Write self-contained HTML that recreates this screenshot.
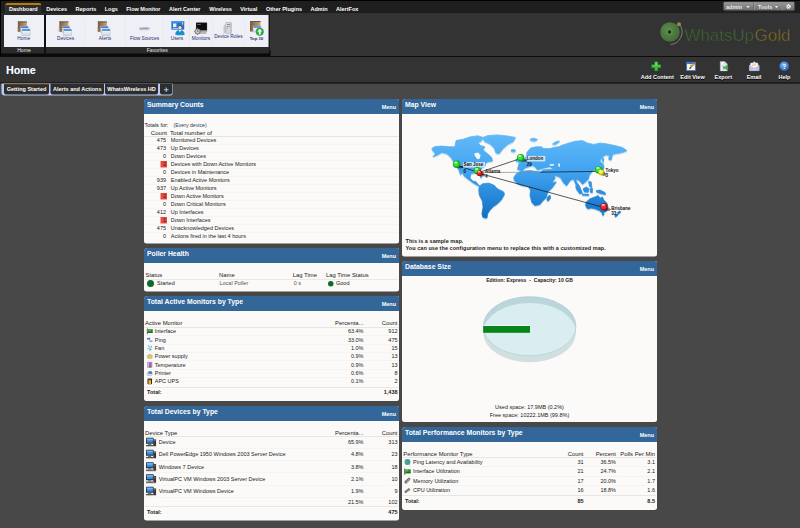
<!DOCTYPE html>
<html>
<head>
<meta charset="utf-8">
<title>WhatsUp Gold - Home</title>
<style>
*{box-sizing:border-box;margin:0;padding:0}
html,body{width:800px;height:528px;overflow:hidden;background:#484848}
body{font-family:"Liberation Sans",sans-serif;font-size:11px;color:#222}
#root{position:absolute;left:0;top:0;width:1600px;height:1056px;transform:scale(.5);transform-origin:0 0;background:#484848;overflow:hidden}
.abs{position:absolute}
/* top nav */
#nav{position:absolute;left:0;top:0;width:1600px;height:28px;background:#1e1e1e;border-top:2px solid #000;border-left:2px solid #000}
.mi{position:absolute;top:10.5px;font-weight:bold;font-size:11px;color:#fff;white-space:nowrap;line-height:13px}
#dashtab{position:absolute;left:10px;top:6px;width:73px;height:22px;background:#2c2c2c;border-top:4px solid #b9790f;border-left:1px solid #595959;border-right:1px solid #444;border-radius:5px 5px 0 0}
#ribbon{position:absolute;left:2px;top:27px;width:539px;height:82px;background:#2a2a2a;border-top:1px solid #505050;border-right:2px solid #0a0a0a;border-bottom:2px solid #0a0a0a;border-radius:0 0 6px 4px}
.grp{position:absolute;top:30px;height:64px;background:#eff0f6}
.glab{position:absolute;top:94px;height:13px;line-height:13px;font-size:10.3px;color:#e4e4e4;text-align:center}
.rb{position:absolute;font-size:9.6px;color:#1b2a6b;text-align:center;white-space:nowrap;line-height:11px;transform:translateX(-50%)}
.vsep{position:absolute;top:33px;height:58px;width:1px;background:#e2e3ea}
/* title band */
#band{position:absolute;left:0;top:112px;width:1600px;height:55px;background:#333;border-top:2px solid #0c0c0c;border-bottom:2px solid #0c0c0c}
#righttop{position:absolute;left:541px;top:27px;width:1059px;height:85px;background:#333;border-top:1px solid #3c3c3c}
#hometitle{position:absolute;left:12px;top:127px;font-size:21.3px;font-weight:bold;color:#fff;line-height:26px;text-shadow:1px 1px 0 #4a6a9a}
.tb{position:absolute;top:148px;font-weight:bold;font-size:11px;color:#fff;white-space:nowrap;line-height:13px;transform:translateX(-50%);text-shadow:0 1px 1px #000}
/* tabs */
#tabstrip{position:absolute;left:3px;top:167px;width:342px;height:24px;background:#b9c9f4;border-radius:0 0 4px 6px}
.tab{position:absolute;top:167px;height:22px;background:#2d2d2d;color:#fff;font-weight:bold;font-size:11px;line-height:20px;text-align:center;border-radius:0 0 4px 4px;white-space:nowrap}
/* panels */
.panel{position:absolute;background:#fbfaf8;border-radius:8px 4px 5px 5px;overflow:hidden}
.ph{position:absolute;left:0;top:0;right:0;height:30px;background:#336699}
.ph .t{position:absolute;left:6px;top:4px;font-size:13.7px;font-weight:bold;color:#fff;line-height:16px;white-space:nowrap}
.ph .m{position:absolute;right:6px;top:9px;font-size:11px;font-weight:bold;color:#fff;line-height:13px}
.tx{position:absolute;white-space:nowrap;line-height:13px;font-size:11px;color:#222}
.r{text-align:right}
.hl{position:absolute;height:1px;background:#d9d9d9}
</style>
</head>
<body>
<div id="root">

<svg width="0" height="0" style="position:absolute">
<defs>
<linearGradient id="gbrown" x1="0" y1="0" x2="1" y2="0"><stop offset="0" stop-color="#7d5a33"/><stop offset="1" stop-color="#c9a572"/></linearGradient>
<linearGradient id="gwin" x1="0" y1="0" x2="0" y2="1"><stop offset="0" stop-color="#ffffff"/><stop offset="1" stop-color="#cfd6e2"/></linearGradient>

</defs>
</svg>

<!-- NAV -->
<div id="nav"></div>
<div class="abs" style="left:0;top:100px;width:1600px;height:14px;background:#0a0a0a"></div>
<div id="righttop"></div>
<div id="ribbon"></div>
<div id="dashtab"></div>

<div class="grp" style="left:8px;width:80px"></div>
<div class="grp" style="left:92px;width:445px"></div>
<div class="abs" style="left:88px;top:29px;width:4px;height:80px;background:#111"></div>
<div class="glab" style="left:8px;width:80px">Home</div>
<div class="glab" style="left:92px;width:445px">Favorites</div>
<div class="vsep" style="left:169px"></div><div class="vsep" style="left:251px"></div><div class="vsep" style="left:327px"></div><div class="vsep" style="left:379px"></div><div class="vsep" style="left:425px"></div><div class="vsep" style="left:488px"></div>
<svg class="abs" style="left:33px;top:42px" width="29" height="30" viewBox="0 0 32 32" preserveAspectRatio="none">
 <rect x="3" y="1" width="20" height="22" fill="url(#gbrown)"/>
 <rect x="3" y="1" width="20" height="2" fill="#5a5a5a"/>
 <rect x="1" y="14" width="3" height="9" fill="#b9b9b9" opacity=".7"/>
 <rect x="9" y="11" width="17" height="13" fill="url(#gwin)" stroke="#a9b4c6" stroke-width="1"/>
 <rect x="9.5" y="11.5" width="16" height="3.5" fill="#3f7fd6"/>
 <rect x="12" y="17" width="18" height="14" fill="url(#gwin)" stroke="#a9b4c6" stroke-width="1"/>
 <rect x="12.5" y="17.5" width="17" height="3.5" fill="#3f7fd6"/>
</svg>
<svg class="abs" style="left:116px;top:42px" width="29" height="30" viewBox="0 0 32 32" preserveAspectRatio="none">
 <rect x="3" y="1" width="20" height="22" fill="url(#gbrown)"/>
 <rect x="3" y="1" width="20" height="2" fill="#5a5a5a"/>
 <rect x="1" y="14" width="3" height="9" fill="#b9b9b9" opacity=".7"/>
 <rect x="9" y="11" width="17" height="13" fill="url(#gwin)" stroke="#a9b4c6" stroke-width="1"/>
 <rect x="9.5" y="11.5" width="16" height="3.5" fill="#3f7fd6"/>
 <rect x="12" y="17" width="18" height="14" fill="url(#gwin)" stroke="#a9b4c6" stroke-width="1"/>
 <rect x="12.5" y="17.5" width="17" height="3.5" fill="#3f7fd6"/>
</svg>
<svg class="abs" style="left:193px;top:42px" width="29" height="30" viewBox="0 0 32 32" preserveAspectRatio="none">
 <rect x="3" y="1" width="20" height="22" fill="url(#gbrown)"/>
 <rect x="3" y="1" width="20" height="2" fill="#5a5a5a"/>
 <rect x="1" y="14" width="3" height="9" fill="#b9b9b9" opacity=".7"/>
 <rect x="9" y="11" width="17" height="13" fill="url(#gwin)" stroke="#a9b4c6" stroke-width="1"/>
 <rect x="9.5" y="11.5" width="16" height="3.5" fill="#3f7fd6"/>
 <rect x="12" y="17" width="18" height="14" fill="url(#gwin)" stroke="#a9b4c6" stroke-width="1"/>
 <rect x="12.5" y="17.5" width="17" height="3.5" fill="#3f7fd6"/>
</svg>
<div class="rb" style="left:47.5px;top:71px">Home</div>
<div class="rb" style="left:131px;top:71px">Devices</div>
<div class="rb" style="left:210px;top:71px">Alerts</div>
<!-- flow sources -->
<svg class="abs" style="left:277px;top:51px" width="25" height="12.5" viewBox="0 0 40 20">
 <path d="M2 6 L32 5 L38 9 L32 14 L3 14 Z" fill="#c2c4cf"/>
 <path d="M4 8 L30 7.5 L30 11.5 L4 11.5Z" fill="#9c97c6"/>
 <path d="M3 14 L32 14 L38 9 L38 11 L32 16 L3 16Z" fill="#d5d7df"/>
</svg>
<div class="rb" style="left:289px;top:71px">Flow Sources</div>
<!-- users -->
<svg class="abs" style="left:342px;top:41px" width="28" height="30" viewBox="0 0 36 36" preserveAspectRatio="none">
 <rect x="1" y="2" width="33" height="20" fill="#1f6fd8"/>
 <rect x="1" y="2" width="33" height="4" fill="#3f8ff0"/>
 <rect x="5" y="7" width="9" height="9" fill="#e8eef8"/>
 <rect x="28" y="5" width="3" height="5" fill="#f2e14a"/>
 <rect x="4" y="18" width="16" height="2" fill="#bcd3f2"/>
 <circle cx="23" cy="16" r="5.5" fill="#6b5a4a"/>
 <circle cx="23" cy="17.5" r="4.2" fill="#f1d9c4"/>
 <path d="M11 34 Q11 23 23 23 Q35 23 35 34 Q23 38 11 34Z" fill="#1c90c8"/>
 <path d="M20 23 L23 28 L26 23Z" fill="#fff"/>
</svg>
<div class="rb" style="left:354px;top:71px">Users</div>
<!-- monitors -->
<svg class="abs" style="left:387px;top:44px" width="29" height="27" viewBox="0 0 36 34">
 <rect x="6" y="1" width="28" height="22" rx="1.5" fill="#222"/>
 <rect x="8" y="3" width="24" height="17" fill="#0d0d0d"/>
 <rect x="9" y="5" width="9" height="1.5" fill="#9aa"/>
 <rect x="6" y="21" width="28" height="4" fill="#aaa"/>
 <rect x="16" y="25" width="16" height="5" fill="#b5b5b5"/><circle cx="10" cy="24" r="7.5" fill="#828282"/>
 <circle cx="10" cy="24" r="5" fill="#c8c8c8"/>
 <path d="M10 20.5 V24 H13" stroke="#544" stroke-width="1.3" fill="none"/>
 <path d="M10 14.5 V17 M10 31 V33.5 M.5 24 H3 M17 24 H19.5 M3.5 17.5 L5.3 19.3 M16.5 17.5 L14.7 19.3 M3.5 30.5 L5.3 28.7 M16.5 30.5 L14.7 28.7" stroke="#828282" stroke-width="2.4"/>
</svg>
<div class="rb" style="left:402px;top:71px">Monitors</div>
<!-- device roles -->
<svg class="abs" style="left:446px;top:44px" width="20" height="24" viewBox="0 0 20 24">
 <path d="M1 8 L6 3 V21 L1 23Z" fill="#c5c7cc"/>
 <rect x="6" y="1" width="10" height="22" fill="#d9dade" stroke="#a8aab0" stroke-width="1"/>
 <rect x="8" y="4" width="6" height="2" fill="#8d9097"/><rect x="8" y="8" width="6" height="1.4" fill="#8d9097"/>
 <rect x="8" y="11" width="2" height="2" fill="#4cb04c"/>
 <rect x="15" y="2" width="2" height="20" fill="#b0b2b8"/>
</svg>
<div class="rb" style="left:457px;top:66.5px">Device Roles</div>
<!-- top 10 -->
<svg class="abs" style="left:496px;top:41px" width="34" height="34" viewBox="0 0 34 34">
 <rect x="4" y="1" width="21" height="21" fill="url(#gbrown)"/>
 <rect x="4" y="1" width="21" height="2" fill="#5a5a5a"/>
 <rect x="10" y="11" width="16" height="12" fill="url(#gwin)" stroke="#a9b4c6"/>
 <rect x="10.5" y="11.5" width="15" height="3" fill="#3f7fd6"/>
 <circle cx="23.5" cy="22.5" r="7.5" fill="#2fae46"/>
 <circle cx="23.5" cy="22.5" r="7.5" fill="none" stroke="#1d8a33" stroke-width="1"/>
 <path d="M23.5 16.5 L28.5 22 H25.3 V28 H21.7 V22 H18.5Z" fill="#fff"/>
</svg>
<div class="rb" style="left:513px;top:71px;font-weight:bold;font-size:8.6px">Top 10</div>

<div id="nav2" style="position:absolute;left:0;top:0">
<div class="mi" style="left:18px">Dashboard</div><div class="mi" style="left:92.5px">Devices</div><div class="mi" style="left:151px">Reports</div><div class="mi" style="left:209.5px">Logs</div><div class="mi" style="left:252.5px">Flow Monitor</div><div class="mi" style="left:338px">Alert Center</div><div class="mi" style="left:418.5px">Wireless</div><div class="mi" style="left:480.5px">Virtual</div><div class="mi" style="left:532px">Other Plugins</div><div class="mi" style="left:621px">Admin</div><div class="mi" style="left:672px">AlertFox</div>
</div>


<!-- admin/tools -->
<div class="abs" style="left:1446px;top:3px;width:144px;height:19px;border-radius:4px;background:linear-gradient(#9a9a9a,#6e6e6e);border:1px solid #555"></div>
<div class="abs" style="left:1507px;top:4px;width:1px;height:17px;background:#5a5a5a"></div><div class="abs" style="left:1508px;top:4px;width:1px;height:17px;background:#a5a5a5"></div>
<div class="abs" style="left:1564px;top:4px;width:1px;height:17px;background:#5a5a5a"></div><div class="abs" style="left:1565px;top:4px;width:1px;height:17px;background:#a5a5a5"></div>
<div class="mi" style="left:1452px;top:6.5px;text-shadow:0 1px 1px #333">admin</div>
<div class="mi" style="left:1516px;top:6.5px;text-shadow:0 1px 1px #333">Tools</div>
<svg class="abs" style="left:1492px;top:11px" width="8" height="6"><path d="M.5 1 H7.5 L4 5Z" fill="#eee"/></svg>
<svg class="abs" style="left:1549px;top:11px" width="8" height="6"><path d="M.5 1 H7.5 L4 5Z" fill="#eee"/></svg>
<svg class="abs" style="left:1572px;top:8px" width="10" height="10" viewBox="0 0 12 12"><circle cx="6" cy="6" r="4" fill="none" stroke="#fff" stroke-width="3" stroke-dasharray="2.1 1.04"/><circle cx="6" cy="6" r="3" fill="#fff"/><circle cx="6" cy="6" r="1.3" fill="#777"/></svg>
<!-- logo -->
<svg class="abs" style="left:1310px;top:36px" width="280" height="60" viewBox="0 0 280 60">
 <defs><radialGradient id="glogo" cx=".4" cy=".4" r=".7"><stop offset="0" stop-color="#5d8a4c"/><stop offset="1" stop-color="#3f6a33"/></radialGradient></defs>
 <path d="M49 13 A25 25 0 0 1 31 53" fill="none" stroke="#8d8d8d" stroke-width="1.6"/>
 <circle cx="30" cy="28" r="19.5" fill="url(#glogo)"/>
 <circle cx="29" cy="28" r="6" fill="#5f8f50"/>
 <circle cx="29" cy="28" r="3.4" fill="#222"/>
 <circle cx="48" cy="12.5" r="4" fill="#9a8a4a"/>
 <text x="59" y="46" font-family="Liberation Sans, sans-serif" font-size="33.5" fill="#3f6f30" stroke="#333" stroke-width="1.1" paint-order="fill stroke" textLength="139" lengthAdjust="spacingAndGlyphs">WhatsUp</text>
 <text x="199" y="46" font-family="Liberation Sans, sans-serif" font-size="33.5" fill="#8a751d" stroke="#333" stroke-width="1.1" paint-order="fill stroke" textLength="72" lengthAdjust="spacingAndGlyphs">Gold</text>
</svg>

<div class="abs" style="left:0;top:0;width:2px;height:113px;background:#000"></div>
<div class="abs" style="left:11px;top:27px;width:72px;height:2px;background:#2c2c2c"></div>
<div id="band"></div>
<div id="hometitle">Home</div>


<!-- toolbar -->
<svg class="abs" style="left:1302px;top:122px" width="21" height="21" viewBox="0 0 24 24"><path d="M8.5 1.5 H15.5 V8.5 H22.5 V15.5 H15.5 V22.5 H8.5 V15.5 H1.5 V8.5 H8.5Z" fill="#3fc23f" stroke="#1f8a22" stroke-width="1.2"/><path d="M9.5 3 H14.5 V9.5 H21 V11 H3 V9.5 H9.5Z" fill="#7be07b" opacity=".7"/></svg>
<svg class="abs" style="left:1371px;top:122px" width="22" height="21" viewBox="0 0 24 24"><rect x="2" y="3" width="20" height="19" fill="#f4f7fb" stroke="#3b74c4" stroke-width="2"/><rect x="2" y="3" width="20" height="4" fill="#3b74c4"/><path d="M8 18 L10 13 L19 3 L22 6 L13 16 Z" fill="#e8a23a"/><path d="M8 18 L10 13 L13 16Z" fill="#333"/><path d="M17 5 L19 3 L22 6 L20 8Z" fill="#d4423a"/><path d="M10 10 L15 10" stroke="#3fae3f" stroke-width="2"/></svg>
<svg class="abs" style="left:1437px;top:122px" width="21" height="21" viewBox="0 0 24 24"><path d="M4 1 H14 L20 7 V23 H4Z" fill="#f2f5fa" stroke="#9fb0c8" stroke-width="1.2"/><path d="M14 1 V7 H20" fill="#d5deea" stroke="#9fb0c8"/><path d="M7 10 H14 M7 13 H12 M7 19 H15" stroke="#a9b7cc" stroke-width="1.2"/><path d="M11 13 H17 V9.5 L23 15 L17 20.5 V17 H11Z" fill="#3db43d" stroke="#1f8a22" stroke-width=".8"/></svg>
<svg class="abs" style="left:1497px;top:122px" width="23" height="21" viewBox="0 0 28 26"><path d="M2 11 L14 1 L26 11 V24 H2Z" fill="#d9dcf0" stroke="#9a9fc8"/><rect x="5" y="5" width="18" height="13" fill="#fff" stroke="#c9c9d8"/><path d="M2 11 L14 18 L26 11 V24 H2Z" fill="#c9cdea" stroke="#9a9fc8"/><path d="M2 24 L11 16 M26 24 L17 16" stroke="#9a9fc8"/><path d="M8 8 H20 M8 11 H18" stroke="#e0a030" stroke-width="1.2"/></svg>
<svg class="abs" style="left:1558px;top:122px" width="21" height="21" viewBox="0 0 24 24"><defs><radialGradient id="ghelp" cx=".4" cy=".3" r=".8"><stop offset="0" stop-color="#7db4f0"/><stop offset="1" stop-color="#1d5fb8"/></radialGradient></defs><circle cx="12" cy="12" r="11" fill="url(#ghelp)" stroke="#194f9a"/><text x="12" y="17.5" text-anchor="middle" font-family="Liberation Sans, sans-serif" font-weight="bold" font-size="15" fill="#fff">?</text></svg>
<div class="tb" style="left:1314.5px">Add Content</div>
<div class="tb" style="left:1385px">Edit View</div>
<div class="tb" style="left:1446.5px">Export</div>
<div class="tb" style="left:1508px">Email</div>
<div class="tb" style="left:1569px">Help</div>
<div id="tabstrip"></div>
<div class="tab" style="left:8px;width:90px;border-top:2px solid #b8760f;line-height:17px;top:167px;height:22px">Getting Started</div>
<div class="tab" style="left:101px;width:107px">Alerts and Actions</div>
<div class="tab" style="left:210px;width:106px">WhatsWireless HD</div>
<div class="tab" style="left:320px;width:24px"></div><svg class="abs" style="left:327px;top:174px" width="11" height="11"><path d="M5.5 1 V10 M1 5.5 H10" stroke="#9ccaf7" stroke-width="2.2"/></svg>


<!--PANELS-->
<div class="panel" style="left:288px;top:198px;width:510px;height:289px"><div class="ph"><div class="t">Summary Counts</div><div class="m">Menu</div></div></div>
<div class="tx " style="left:289px;top:244.0px;color:#223">Totals for:</div><div class="tx " style="left:347px;top:244.0px;color:#345;font-size:10.4px">(Every device)</div><div class="tx r" style="right:1266px;top:258.5px;font-size:12.2px">Count</div><div class="tx " style="left:340px;top:258.5px;font-size:12.2px">Total number of</div><div class="hl" style="left:289px;top:272px;width:508px;background:#cfcfcf"></div><div class="tx r" style="right:1268px;top:274.2px;">475</div><div class="tx " style="left:341.5px;top:274.2px;">Monitored Devices</div><div class="hl" style="left:289px;top:288.7px;width:508px;background:#eeeeee"></div><div class="tx r" style="right:1268px;top:290.2px;">473</div><div class="tx " style="left:341.5px;top:290.2px;">Up Devices</div><div class="hl" style="left:289px;top:304.7px;width:508px;background:#eeeeee"></div><div class="tx r" style="right:1268px;top:306.2px;">0</div><div class="tx " style="left:341.5px;top:306.2px;">Down Devices</div><div class="hl" style="left:289px;top:320.7px;width:508px;background:#eeeeee"></div><div class="abs" style="left:321px;top:322.2px;width:13px;height:13px;background:#ea4a42"></div><div class="tx r" style="right:1268px;top:322.2px;">2</div><div class="tx " style="left:341.5px;top:322.2px;">Devices with Down Active Monitors</div><div class="hl" style="left:289px;top:336.7px;width:508px;background:#eeeeee"></div><div class="tx r" style="right:1268px;top:338.2px;">0</div><div class="tx " style="left:341.5px;top:338.2px;">Devices in Maintenance</div><div class="hl" style="left:289px;top:352.7px;width:508px;background:#eeeeee"></div><div class="tx r" style="right:1268px;top:354.2px;">939</div><div class="tx " style="left:341.5px;top:354.2px;">Enabled Active Monitors</div><div class="hl" style="left:289px;top:368.7px;width:508px;background:#eeeeee"></div><div class="tx r" style="right:1268px;top:370.2px;">937</div><div class="tx " style="left:341.5px;top:370.2px;">Up Active Monitors</div><div class="hl" style="left:289px;top:384.7px;width:508px;background:#eeeeee"></div><div class="abs" style="left:321px;top:386.2px;width:13px;height:13px;background:#ea4a42"></div><div class="tx r" style="right:1268px;top:386.2px;">2</div><div class="tx " style="left:341.5px;top:386.2px;">Down Active Monitors</div><div class="hl" style="left:289px;top:400.7px;width:508px;background:#eeeeee"></div><div class="tx r" style="right:1268px;top:402.2px;">0</div><div class="tx " style="left:341.5px;top:402.2px;">Down Critical Monitors</div><div class="hl" style="left:289px;top:416.7px;width:508px;background:#eeeeee"></div><div class="tx r" style="right:1268px;top:418.2px;">412</div><div class="tx " style="left:341.5px;top:418.2px;">Up Interfaces</div><div class="hl" style="left:289px;top:432.7px;width:508px;background:#eeeeee"></div><div class="abs" style="left:321px;top:434.2px;width:13px;height:13px;background:#ea4a42"></div><div class="tx r" style="right:1268px;top:434.2px;">1</div><div class="tx " style="left:341.5px;top:434.2px;">Down Interfaces</div><div class="hl" style="left:289px;top:448.7px;width:508px;background:#eeeeee"></div><div class="tx r" style="right:1268px;top:450.2px;">475</div><div class="tx " style="left:341.5px;top:450.2px;">Unacknowledged Devices</div><div class="hl" style="left:289px;top:464.7px;width:508px;background:#eeeeee"></div><div class="tx r" style="right:1268px;top:466.2px;">0</div><div class="tx " style="left:341.5px;top:466.2px;">Actions fired in the last 4 hours</div>
<div class="panel" style="left:288px;top:496px;width:510px;height:87px"><div class="ph"><div class="t">Poller Health</div><div class="m">Menu</div></div></div>
<div class="tx " style="left:291px;top:543.5px;font-size:11.8px;">Status</div><div class="tx " style="left:438px;top:543.5px;font-size:11.8px;">Name</div><div class="tx " style="left:585.5px;top:543.5px;font-size:11.8px;">Lag Time</div><div class="tx " style="left:652px;top:543.5px;font-size:11.8px;">Lag Time Status</div><div class="hl" style="left:289px;top:558px;width:508px;background:#d8d8d8"></div><div class="abs" style="left:294px;top:559.5px;width:14px;height:14px;border-radius:50%;background:#0a6b2b"></div><div class="tx " style="left:314px;top:559.5px;">Started</div><div class="tx " style="left:439px;top:560.0px;color:#555">Local Poller</div><div class="tx " style="left:587.5px;top:560.0px;color:#555">0 s</div><div class="abs" style="left:655.5px;top:561.5px;width:11px;height:11px;border-radius:50%;background:#0a6b2b"></div><div class="tx " style="left:672px;top:560.0px;">Good</div>
<div class="panel" style="left:288px;top:592px;width:510px;height:210px"><div class="ph"><div class="t">Total Active Monitors by Type</div><div class="m">Menu</div></div></div>
<div class="tx " style="left:290px;top:639.3px;font-size:11.8px;">Active Monitor</div><div class="tx r" style="right:873px;top:639.3px;font-size:11.8px;">Percenta...</div><div class="tx r" style="right:805px;top:639.3px;font-size:11.8px;">Count</div><div class="hl" style="left:289px;top:654px;width:508px;background:#d4d4d4"></div><svg class="abs" style="left:292.5px;top:656.0px" width="13" height="13" viewBox="0 0 13 13"><path d="M1.5 1 V12.5" stroke="#222" stroke-width="1.6"/><rect x="2.5" y="2.5" width="10" height="7" fill="#1d8a1d"/><rect x="4" y="4" width="4" height="2" fill="#6fd06f"/><rect x="2.5" y="8.5" width="10" height="1.3" fill="#0c4d0c"/></svg><div class="tx " style="left:309.5px;top:656.0px;">Interface</div><div class="tx r" style="right:873px;top:656.0px;">63.4%</div><div class="tx r" style="right:805px;top:656.0px;">912</div><svg class="abs" style="left:292.5px;top:672.7px" width="13" height="13" viewBox="0 0 13 13"><path d="M1 3 L5 3 L5 1 L8 4.5 L5 8 L5 6 L1 6Z" fill="#5a6fd8"/><path d="M12 8 L8 8 L8 6.3 L5.5 9.5 L8 12.5 L8 11 L12 11Z" fill="#8f9fe8"/></svg><div class="tx " style="left:309.5px;top:672.7px;">Ping</div><div class="tx r" style="right:873px;top:672.7px;">33.0%</div><div class="tx r" style="right:805px;top:672.7px;">475</div><svg class="abs" style="left:292.5px;top:689.4px" width="13" height="13" viewBox="0 0 13 13"><path d="M6.5 6.5 L2 2 Q6.5 0 6.5 6.5 L11 2 Q12.5 6.5 6.5 6.5 L11 10 Q6.5 13 6.5 6.5 L2 10 Q.5 6.5 6.5 6.5Z" fill="#25b5d8"/><path d="M6.5 8 V13" stroke="#25b5d8" stroke-width="1.5"/></svg><div class="tx " style="left:309.5px;top:689.4px;">Fan</div><div class="tx r" style="right:873px;top:689.4px;">1.0%</div><div class="tx r" style="right:805px;top:689.4px;">15</div><svg class="abs" style="left:292.5px;top:706.1px" width="13" height="13" viewBox="0 0 13 13"><ellipse cx="6.5" cy="7.5" rx="6" ry="4.5" fill="#c9c2a0"/><ellipse cx="7" cy="8" rx="3.5" ry="2.5" fill="#f0c81e"/><path d="M2 5 L5 3 L9 3 L11 5" stroke="#999" fill="none"/></svg><div class="tx " style="left:309.5px;top:706.1px;">Power supply</div><div class="tx r" style="right:873px;top:706.1px;">0.9%</div><div class="tx r" style="right:805px;top:706.1px;">13</div><svg class="abs" style="left:292.5px;top:722.8px" width="13" height="13" viewBox="0 0 13 13"><rect x="1.5" y=".5" width="10" height="12" fill="#8f8fdc"/><rect x="2.5" y="1.5" width="3" height="10" fill="#b9b9f0"/><rect x="6" y="2" width="2" height="7" fill="#e03a2a"/><circle cx="7" cy="10" r="1.8" fill="#e03a2a"/></svg><div class="tx " style="left:309.5px;top:722.8px;">Temperature</div><div class="tx r" style="right:873px;top:722.8px;">0.9%</div><div class="tx r" style="right:805px;top:722.8px;">13</div><svg class="abs" style="left:292.5px;top:739.5px" width="13" height="13" viewBox="0 0 13 13"><ellipse cx="6" cy="8" rx="6" ry="4" fill="#b8bcc4"/><path d="M3 3 L10 2 L12 7 L5 9Z" fill="#3f86d8"/><rect x="2" y="8" width="8" height="2.5" fill="#e9ebf0"/></svg><div class="tx " style="left:309.5px;top:739.5px;">Printer</div><div class="tx r" style="right:873px;top:739.5px;">0.6%</div><div class="tx r" style="right:805px;top:739.5px;">8</div><svg class="abs" style="left:292.5px;top:756.2px" width="13" height="13" viewBox="0 0 13 13"><rect x="2" y="1" width="9" height="12" rx="1.5" fill="#2a2a2a"/><rect x="4" y="2" width="5" height="10" fill="#f0b81e"/><rect x="4" y="2" width="5" height="2.5" fill="#444"/></svg><div class="tx " style="left:309.5px;top:756.2px;">APC UPS</div><div class="tx r" style="right:873px;top:756.2px;">0.1%</div><div class="tx r" style="right:805px;top:756.2px;">2</div><div class="hl" style="left:289px;top:774px;width:508px;background:#d4d4d4"></div><div class="tx " style="left:294px;top:777.7px;font-weight:bold">Total:</div><div class="tx r" style="right:805px;top:777.7px;font-weight:bold">1,438</div><div class="hl" style="left:289px;top:670.8px;width:508px;background:#efefef"></div><div class="hl" style="left:289px;top:687.5px;width:508px;background:#efefef"></div><div class="hl" style="left:289px;top:704.2px;width:508px;background:#efefef"></div><div class="hl" style="left:289px;top:720.9px;width:508px;background:#efefef"></div><div class="hl" style="left:289px;top:737.6px;width:508px;background:#efefef"></div><div class="hl" style="left:289px;top:754.3px;width:508px;background:#efefef"></div>
<div class="panel" style="left:288px;top:812px;width:510px;height:229px"><div class="ph"><div class="t">Total Devices by Type</div><div class="m">Menu</div></div></div>
<div class="tx " style="left:290px;top:859.0px;font-size:11.8px;">Device Type</div><div class="tx r" style="right:873px;top:859.0px;font-size:11.8px;">Percenta...</div><div class="tx r" style="right:805px;top:859.0px;font-size:11.8px;">Count</div><div class="hl" style="left:289px;top:873px;width:508px;background:#d4d4d4"></div><svg class="abs" style="left:292px;top:873.5px" width="21" height="21" viewBox="0 0 13 13"><rect x="0" y="1" width="9.5" height="7.5" rx=".8" fill="#2b2b2b"/><rect x="1" y="2" width="7.5" height="5" fill="#2f8fe8"/><rect x="1" y="2" width="7.5" height="2" fill="#6fb8f5"/><rect x="9" y="3" width="3.6" height="8.5" fill="#3a3a3a"/><rect x="9.8" y="4.2" width="2" height=".8" fill="#999"/><rect x="2.5" y="8.5" width="4" height="1.2" fill="#555"/><rect x="0" y="10" width="9" height="1.6" fill="#444"/><rect x="0" y="11.6" width="12" height="1" fill="#ccc"/></svg><div class="tx " style="left:317.5px;top:877.5px;">Device</div><div class="tx r" style="right:873px;top:877.5px;">65.9%</div><div class="tx r" style="right:805px;top:877.5px;">313</div><svg class="abs" style="left:292px;top:898.0px" width="21" height="21" viewBox="0 0 13 13"><rect x="0" y="1" width="9.5" height="7.5" rx=".8" fill="#2b2b2b"/><rect x="1" y="2" width="7.5" height="5" fill="#2f8fe8"/><rect x="1" y="2" width="7.5" height="2" fill="#6fb8f5"/><rect x="9" y="3" width="3.6" height="8.5" fill="#3a3a3a"/><rect x="9.8" y="4.2" width="2" height=".8" fill="#999"/><rect x="2.5" y="8.5" width="4" height="1.2" fill="#555"/><rect x="0" y="10" width="9" height="1.6" fill="#444"/><rect x="0" y="11.6" width="12" height="1" fill="#ccc"/></svg><div class="tx " style="left:317.5px;top:902.0px;">Dell PowerEdge 1950 Windows 2003 Server Device</div><div class="tx r" style="right:873px;top:902.0px;">4.8%</div><div class="tx r" style="right:805px;top:902.0px;">23</div><svg class="abs" style="left:292px;top:922.6px" width="21" height="21" viewBox="0 0 13 13"><rect x="0" y="1" width="9.5" height="7.5" rx=".8" fill="#2b2b2b"/><rect x="1" y="2" width="7.5" height="5" fill="#2f8fe8"/><rect x="1" y="2" width="7.5" height="2" fill="#6fb8f5"/><rect x="9" y="3" width="3.6" height="8.5" fill="#3a3a3a"/><rect x="9.8" y="4.2" width="2" height=".8" fill="#999"/><rect x="2.5" y="8.5" width="4" height="1.2" fill="#555"/><rect x="0" y="10" width="9" height="1.6" fill="#444"/><rect x="0" y="11.6" width="12" height="1" fill="#ccc"/></svg><div class="tx " style="left:317.5px;top:926.6px;">Windows 7 Device</div><div class="tx r" style="right:873px;top:926.6px;">3.8%</div><div class="tx r" style="right:805px;top:926.6px;">18</div><svg class="abs" style="left:292px;top:947.1px" width="21" height="21" viewBox="0 0 13 13"><rect x="0" y="1" width="9.5" height="7.5" rx=".8" fill="#2b2b2b"/><rect x="1" y="2" width="7.5" height="5" fill="#2f8fe8"/><rect x="1" y="2" width="7.5" height="2" fill="#6fb8f5"/><rect x="9" y="3" width="3.6" height="8.5" fill="#3a3a3a"/><rect x="9.8" y="4.2" width="2" height=".8" fill="#999"/><rect x="2.5" y="8.5" width="4" height="1.2" fill="#555"/><rect x="0" y="10" width="9" height="1.6" fill="#444"/><rect x="0" y="11.6" width="12" height="1" fill="#ccc"/></svg><div class="tx " style="left:317.5px;top:951.1px;">VirtualPC VM Windows 2003 Server Device</div><div class="tx r" style="right:873px;top:951.1px;">2.1%</div><div class="tx r" style="right:805px;top:951.1px;">10</div><svg class="abs" style="left:292px;top:971.7px" width="21" height="21" viewBox="0 0 13 13"><rect x="0" y="1" width="9.5" height="7.5" rx=".8" fill="#2b2b2b"/><rect x="1" y="2" width="7.5" height="5" fill="#2f8fe8"/><rect x="1" y="2" width="7.5" height="2" fill="#6fb8f5"/><rect x="9" y="3" width="3.6" height="8.5" fill="#3a3a3a"/><rect x="9.8" y="4.2" width="2" height=".8" fill="#999"/><rect x="2.5" y="8.5" width="4" height="1.2" fill="#555"/><rect x="0" y="10" width="9" height="1.6" fill="#444"/><rect x="0" y="11.6" width="12" height="1" fill="#ccc"/></svg><div class="tx " style="left:317.5px;top:975.7px;">VirtualPC VM Windows Device</div><div class="tx r" style="right:873px;top:975.7px;">1.9%</div><div class="tx r" style="right:805px;top:975.7px;">9</div><div class="hl" style="left:289px;top:1013px;width:508px;background:#d4d4d4"></div><div class="tx " style="left:294px;top:1017.7px;font-weight:bold">Total:</div><div class="tx r" style="right:805px;top:1017.7px;font-weight:bold">475</div><div class="tx r" style="right:873px;top:997.0px;">21.5%</div><div class="tx r" style="right:805px;top:997.0px;">102</div><div class="hl" style="left:289px;top:896.3px;width:508px;background:#efefef"></div><div class="hl" style="left:289px;top:920.8px;width:508px;background:#efefef"></div><div class="hl" style="left:289px;top:945.4px;width:508px;background:#efefef"></div><div class="hl" style="left:289px;top:969.9px;width:508px;background:#efefef"></div><div class="hl" style="left:289px;top:994.5px;width:508px;background:#efefef"></div>
<div class="panel" style="left:804px;top:198px;width:510px;height:315px"><div class="ph"><div class="t">Map View</div><div class="m">Menu</div></div></div>
<div class="tx " style="left:811px;top:475.5px;font-weight:bold;letter-spacing:.1px">This is a sample map.</div><div class="tx " style="left:811px;top:489.0px;font-weight:bold;letter-spacing:.1px">You can use the configuration menu to replace this with a customized map.</div><svg class="abs" style="left:850px;top:250px" width="420" height="210" viewBox="0 0 420 210">
<defs><linearGradient id="gmap" gradientUnits="userSpaceOnUse" x1="0" y1="18" x2="0" y2="190"><stop offset="0" stop-color="#62baf8"/><stop offset=".45" stop-color="#3fa2f0"/><stop offset="1" stop-color="#0f6cc0"/></linearGradient></defs>
<g fill="#b9d4ea" stroke="#b9d4ea" stroke-width="1.5" stroke-linejoin="round" transform="translate(0,2.5)" opacity=".8"><polygon points="13.5,47.2 19.8,43.0 33.5,42.2 48.5,43.5 59.8,43.5 62.2,31.0 76.0,28.5 91.0,23.5 106.0,21.5 116.0,24.8 113.5,31.0 106.0,36.0 111.0,41.0 119.8,43.5 116.0,49.8 123.5,56.0 133.5,64.8 134.8,72.2 126.0,73.5 119.8,77.2 121.0,81.0 113.5,86.0 109.8,93.5 113.5,102.2 112.2,106.0 108.5,98.5 102.2,94.8 92.2,97.2 89.8,106.0 96.0,112.2 102.2,113.5 106.0,118.5 111.0,123.5 104.8,120.5 98.5,117.2 88.5,109.8 78.5,102.2 73.5,93.5 71.5,99.8 67.2,88.5 62.2,82.2 57.2,73.5 52.2,64.8 43.5,57.2 33.5,54.8 24.8,59.8 16.0,63.5 21.0,57.2 17.2,53.5"/><polygon points="116.0,24.8 126.0,21.0 146.0,19.8 166.0,22.2 181.0,24.8 176.0,33.5 166.0,38.5 156.0,47.2 148.5,57.2 142.2,56.0 138.5,46.0 131.0,38.5 118.5,32.2"/><polygon points="172.2,49.8 177.2,48.5 181.5,51.0 178.5,54.0 173.0,53.0"/><polygon points="108.8,122.5 115.0,117.5 127.5,116.2 137.5,120.0 145.0,127.5 157.5,133.8 158.8,138.8 152.5,150.0 145.0,157.5 137.5,162.5 130.0,170.0 125.0,177.5 123.8,186.2 116.2,185.0 113.8,177.5 116.2,165.0 115.0,152.5 108.8,140.0 107.5,130.0"/><polygon points="177.5,105.0 182.5,97.5 192.5,92.5 210.0,91.2 230.0,93.8 242.5,97.5 245.0,105.0 252.5,115.0 262.5,113.8 255.0,125.0 245.0,135.0 242.5,145.0 235.0,152.5 230.0,158.8 220.0,161.2 213.8,155.0 210.0,140.0 211.2,130.0 206.2,122.5 195.0,121.2 185.0,117.5 178.8,111.2"/><polygon points="245.0,143.8 250.0,140.0 251.2,146.2 246.2,152.5 243.8,150.0"/><polygon points="185.0,88.5 187.5,78.5 192.5,74.8 190.0,68.5 200.0,67.2 203.8,59.8 203.8,54.8 211.2,46.0 222.5,43.5 232.5,43.5 237.5,47.2 250.0,47.2 257.5,44.8 267.5,43.5 275.0,40.0 287.5,36.2 300.0,32.5 315.0,31.2 325.0,36.2 337.5,38.8 350.0,36.2 362.5,37.5 380.0,41.2 395.0,45.0 403.8,51.2 397.5,53.8 388.8,56.2 380.0,57.5 375.0,58.8 372.5,70.0 367.5,68.8 368.8,60.0 360.0,60.0 352.5,66.2 350.0,72.5 355.0,77.5 350.0,82.5 345.0,82.5 342.5,87.5 335.0,92.5 328.5,100.3 327.0,107.9 320.9,113.9 314.8,118.5 311.8,113.9 305.8,109.4 301.2,107.9 304.2,115.5 308.8,121.5 314.8,136.7 311.8,136.7 305.8,127.6 302.7,121.5 299.7,113.9 296.7,107.9 290.6,110.9 283.0,121.5 277.0,115.5 270.9,104.8 264.8,102.6 258.8,100.3 260.3,106.4 255.8,112.4 249.7,117.0 243.6,115.5 237.6,104.8 233.0,98.8 236.2,97.2 232.5,94.8 235.0,89.8 257.5,88.5 250.0,83.5 237.5,86.0 230.0,88.5 225.0,89.8 220.0,83.5 215.0,81.0 207.5,83.5 200.0,86.0 193.8,92.2"/><polygon points="187.5,64.8 191.2,62.2 193.8,68.5 192.5,74.8 187.0,76.0 188.8,69.8"/><polygon points="182.5,68.5 186.2,68.0 185.8,73.0 182.0,72.5"/><polygon points="210.0,28.5 217.5,26.0 225.0,29.0 220.0,32.0 212.5,31.5"/><polygon points="255.0,38.0 262.5,33.0 268.8,32.0 267.5,34.5 260.0,39.0"/><polygon points="351.2,81.2 356.2,77.5 358.0,85.0 355.0,93.8 348.8,96.2 350.0,90.0 353.0,86.2"/><polygon points="355.0,63.8 357.5,67.5 356.5,75.0 354.2,70.0"/><polygon points="327.5,112.5 332.5,113.8 333.8,125.0 330.0,123.8 328.0,117.5"/><polygon points="316.2,127.5 322.5,123.8 328.0,127.5 326.2,134.5 318.8,133.8"/><polygon points="301.2,122.5 306.2,125.0 312.5,135.0 310.0,138.0 303.8,130.0"/><polygon points="314.5,138.2 327.5,139.2 327.5,141.2 314.5,140.2"/><polygon points="330.0,127.5 335.0,127.0 334.5,135.5 331.0,134.5"/><polygon points="342.5,131.2 350.0,130.0 360.0,135.0 361.2,138.8 352.5,137.5 343.8,134.5"/><polygon points="322.5,153.8 330.0,147.5 340.0,143.8 346.2,141.2 350.0,146.2 355.0,143.8 357.5,150.0 363.8,156.2 366.2,165.0 362.5,172.5 355.0,176.2 348.8,171.2 340.0,167.5 332.5,166.2 325.0,167.5 321.2,161.2"/><polygon points="354.5,177.5 358.0,177.5 357.0,180.5 355.0,180.0"/><polygon points="385.0,175.0 390.0,172.0 391.2,174.5 387.0,177.5"/><polygon points="379.5,181.2 385.0,177.5 386.2,179.5 381.2,183.8"/></g>
<g fill="url(#gmap)" stroke="url(#gmap)" stroke-width="1.6" stroke-linejoin="round"><polygon points="13.5,47.2 19.8,43.0 33.5,42.2 48.5,43.5 59.8,43.5 62.2,31.0 76.0,28.5 91.0,23.5 106.0,21.5 116.0,24.8 113.5,31.0 106.0,36.0 111.0,41.0 119.8,43.5 116.0,49.8 123.5,56.0 133.5,64.8 134.8,72.2 126.0,73.5 119.8,77.2 121.0,81.0 113.5,86.0 109.8,93.5 113.5,102.2 112.2,106.0 108.5,98.5 102.2,94.8 92.2,97.2 89.8,106.0 96.0,112.2 102.2,113.5 106.0,118.5 111.0,123.5 104.8,120.5 98.5,117.2 88.5,109.8 78.5,102.2 73.5,93.5 71.5,99.8 67.2,88.5 62.2,82.2 57.2,73.5 52.2,64.8 43.5,57.2 33.5,54.8 24.8,59.8 16.0,63.5 21.0,57.2 17.2,53.5"/><polygon points="116.0,24.8 126.0,21.0 146.0,19.8 166.0,22.2 181.0,24.8 176.0,33.5 166.0,38.5 156.0,47.2 148.5,57.2 142.2,56.0 138.5,46.0 131.0,38.5 118.5,32.2"/><polygon points="172.2,49.8 177.2,48.5 181.5,51.0 178.5,54.0 173.0,53.0"/><polygon points="108.8,122.5 115.0,117.5 127.5,116.2 137.5,120.0 145.0,127.5 157.5,133.8 158.8,138.8 152.5,150.0 145.0,157.5 137.5,162.5 130.0,170.0 125.0,177.5 123.8,186.2 116.2,185.0 113.8,177.5 116.2,165.0 115.0,152.5 108.8,140.0 107.5,130.0"/><polygon points="177.5,105.0 182.5,97.5 192.5,92.5 210.0,91.2 230.0,93.8 242.5,97.5 245.0,105.0 252.5,115.0 262.5,113.8 255.0,125.0 245.0,135.0 242.5,145.0 235.0,152.5 230.0,158.8 220.0,161.2 213.8,155.0 210.0,140.0 211.2,130.0 206.2,122.5 195.0,121.2 185.0,117.5 178.8,111.2"/><polygon points="245.0,143.8 250.0,140.0 251.2,146.2 246.2,152.5 243.8,150.0"/><polygon points="185.0,88.5 187.5,78.5 192.5,74.8 190.0,68.5 200.0,67.2 203.8,59.8 203.8,54.8 211.2,46.0 222.5,43.5 232.5,43.5 237.5,47.2 250.0,47.2 257.5,44.8 267.5,43.5 275.0,40.0 287.5,36.2 300.0,32.5 315.0,31.2 325.0,36.2 337.5,38.8 350.0,36.2 362.5,37.5 380.0,41.2 395.0,45.0 403.8,51.2 397.5,53.8 388.8,56.2 380.0,57.5 375.0,58.8 372.5,70.0 367.5,68.8 368.8,60.0 360.0,60.0 352.5,66.2 350.0,72.5 355.0,77.5 350.0,82.5 345.0,82.5 342.5,87.5 335.0,92.5 328.5,100.3 327.0,107.9 320.9,113.9 314.8,118.5 311.8,113.9 305.8,109.4 301.2,107.9 304.2,115.5 308.8,121.5 314.8,136.7 311.8,136.7 305.8,127.6 302.7,121.5 299.7,113.9 296.7,107.9 290.6,110.9 283.0,121.5 277.0,115.5 270.9,104.8 264.8,102.6 258.8,100.3 260.3,106.4 255.8,112.4 249.7,117.0 243.6,115.5 237.6,104.8 233.0,98.8 236.2,97.2 232.5,94.8 235.0,89.8 257.5,88.5 250.0,83.5 237.5,86.0 230.0,88.5 225.0,89.8 220.0,83.5 215.0,81.0 207.5,83.5 200.0,86.0 193.8,92.2"/><polygon points="187.5,64.8 191.2,62.2 193.8,68.5 192.5,74.8 187.0,76.0 188.8,69.8"/><polygon points="182.5,68.5 186.2,68.0 185.8,73.0 182.0,72.5"/><polygon points="210.0,28.5 217.5,26.0 225.0,29.0 220.0,32.0 212.5,31.5"/><polygon points="255.0,38.0 262.5,33.0 268.8,32.0 267.5,34.5 260.0,39.0"/><polygon points="351.2,81.2 356.2,77.5 358.0,85.0 355.0,93.8 348.8,96.2 350.0,90.0 353.0,86.2"/><polygon points="355.0,63.8 357.5,67.5 356.5,75.0 354.2,70.0"/><polygon points="327.5,112.5 332.5,113.8 333.8,125.0 330.0,123.8 328.0,117.5"/><polygon points="316.2,127.5 322.5,123.8 328.0,127.5 326.2,134.5 318.8,133.8"/><polygon points="301.2,122.5 306.2,125.0 312.5,135.0 310.0,138.0 303.8,130.0"/><polygon points="314.5,138.2 327.5,139.2 327.5,141.2 314.5,140.2"/><polygon points="330.0,127.5 335.0,127.0 334.5,135.5 331.0,134.5"/><polygon points="342.5,131.2 350.0,130.0 360.0,135.0 361.2,138.8 352.5,137.5 343.8,134.5"/><polygon points="322.5,153.8 330.0,147.5 340.0,143.8 346.2,141.2 350.0,146.2 355.0,143.8 357.5,150.0 363.8,156.2 366.2,165.0 362.5,172.5 355.0,176.2 348.8,171.2 340.0,167.5 332.5,166.2 325.0,167.5 321.2,161.2"/><polygon points="354.5,177.5 358.0,177.5 357.0,180.5 355.0,180.0"/><polygon points="385.0,175.0 390.0,172.0 391.2,174.5 387.0,177.5"/><polygon points="379.5,181.2 385.0,177.5 386.2,179.5 381.2,183.8"/></g>
<g fill="#f6f8fa"><polygon points="98.5,57.2 106.0,54.8 111.0,59.8 109.8,67.2 104.8,68.5 102.2,64.8 99.8,62.2"/><polygon points="248.8,78.5 257.5,78.0 258.8,81.0 250.0,81.5"/><polygon points="266.2,77.2 269.5,77.2 270.0,83.5 267.0,83.0"/></g>
<line x1="62.0" y1="80.0" x2="107.0" y2="95.0" stroke="#111" stroke-width="1.4"/><line x1="108.0" y1="95.0" x2="191.2" y2="67.0" stroke="#111" stroke-width="1.4"/><line x1="110.0" y1="95.2" x2="230.0" y2="94.4" stroke="#8a8a8a" stroke-width="1.4"/><line x1="230.0" y1="94.4" x2="346.0" y2="92.8" stroke="#111" stroke-width="1.4"/><line x1="110.0" y1="97.0" x2="358.0" y2="165.0" stroke="#111" stroke-width="1.4"/><rect x="76.0" y="74.1" width="44" height="11" fill="#d9e9f7" opacity=".9"/><text x="77.0" y="82.8" font-family="Liberation Sans, sans-serif" font-size="9" font-weight="bold" fill="#111">San Jose</text><text x="77.0" y="95.2" font-family="Liberation Sans, sans-serif" font-size="9" font-weight="bold" fill="#111">0</text><text x="120.0" y="95.2" font-family="Liberation Sans, sans-serif" font-size="9" font-weight="bold" fill="#111">Atlanta</text><text x="120.0" y="105.4" font-family="Liberation Sans, sans-serif" font-size="9" font-weight="bold" fill="#111">4</text><rect x="202.6" y="61.9" width="38" height="11" fill="#d9e9f7" opacity=".9"/><text x="203.6" y="70.6" font-family="Liberation Sans, sans-serif" font-size="9" font-weight="bold" fill="#111">London</text><text x="203.6" y="82.0" font-family="Liberation Sans, sans-serif" font-size="9" font-weight="bold" fill="#111">29</text><text x="361.0" y="93.4" font-family="Liberation Sans, sans-serif" font-size="9" font-weight="bold" fill="#111">Tokyo</text><text x="361.0" y="104.7" font-family="Liberation Sans, sans-serif" font-size="9" font-weight="bold" fill="#111">3</text><text x="372.6" y="169.1" font-family="Liberation Sans, sans-serif" font-size="9" font-weight="bold" fill="#111">Brisbane</text><text x="372.6" y="179.4" font-family="Liberation Sans, sans-serif" font-size="9" font-weight="bold" fill="#111">33</text><ellipse cx="69.9" cy="84.2" rx="6.7" ry="2.5" fill="#000" opacity=".55"/><circle cx="63.2" cy="78.6" r="7.4" fill="#0fa80f"/><circle cx="62.4" cy="77.6" r="5.3" fill="#35e335"/><ellipse cx="61.7" cy="74.9" rx="3.1" ry="2.1" fill="#fff" opacity=".75"/><ellipse cx="111.5" cy="97.2" rx="6.7" ry="2.5" fill="#000" opacity=".55"/><circle cx="104.8" cy="91.6" r="7.4" fill="#0fa80f"/><circle cx="104.0" cy="90.6" r="5.3" fill="#35e335"/><ellipse cx="103.3" cy="87.9" rx="3.1" ry="2.1" fill="#fff" opacity=".75"/><ellipse cx="114.4" cy="100.7" rx="5.2" ry="2.5" fill="#000" opacity=".55"/><circle cx="109.2" cy="96.4" r="5.8" fill="#b00d0d"/><circle cx="108.4" cy="95.4" r="4.2" fill="#f03030"/><ellipse cx="107.7" cy="93.5" rx="2.4" ry="1.6" fill="#fff" opacity=".75"/><ellipse cx="197.9" cy="71.2" rx="6.7" ry="2.5" fill="#000" opacity=".55"/><circle cx="191.2" cy="65.6" r="7.4" fill="#0fa80f"/><circle cx="190.4" cy="64.6" r="5.3" fill="#35e335"/><ellipse cx="189.7" cy="61.9" rx="3.1" ry="2.1" fill="#fff" opacity=".75"/><ellipse cx="354.1" cy="95.4" rx="6.7" ry="2.5" fill="#000" opacity=".55"/><circle cx="347.4" cy="89.8" r="7.4" fill="#0fa80f"/><circle cx="346.6" cy="88.8" r="5.3" fill="#35e335"/><ellipse cx="345.9" cy="86.1" rx="3.1" ry="2.1" fill="#fff" opacity=".75"/><ellipse cx="357.6" cy="99.0" rx="5.2" ry="2.5" fill="#000" opacity=".55"/><circle cx="352.4" cy="94.6" r="5.8" fill="#c0b800"/><circle cx="351.6" cy="93.6" r="4.2" fill="#f5f53a"/><ellipse cx="350.9" cy="91.7" rx="2.4" ry="1.6" fill="#fff" opacity=".75"/><ellipse cx="364.7" cy="169.2" rx="6.7" ry="2.5" fill="#000" opacity=".55"/><circle cx="358.0" cy="163.6" r="7.4" fill="#b00d0d"/><circle cx="357.2" cy="162.6" r="5.3" fill="#f03030"/><ellipse cx="356.5" cy="159.9" rx="3.1" ry="2.1" fill="#fff" opacity=".75"/>
</svg>
<div class="panel" style="left:804px;top:522px;width:510px;height:321.5px"><div class="ph"><div class="t">Database Size</div><div class="m">Menu</div></div></div>
<div class="tx" style="left:804px;width:510px;text-align:center;top:553px;font-weight:bold;font-size:10.2px">Edition: Express&nbsp; -&nbsp; Capacity: 10 GB</div><svg class="abs" style="left:954px;top:584px" width="210" height="150" viewBox="954 584 210 150">
<defs><clipPath id="cpTop"><ellipse cx="1059.2" cy="652.4" rx="92.8" ry="59.2"/></clipPath></defs>
<ellipse cx="1059.2" cy="665.2" rx="92.8" ry="59.2" fill="#d2dfe0"/>
<rect x="966.4" y="652.4" width="185.6" height="12.8" fill="#d2dfe0"/>
<ellipse cx="1059.2" cy="652.4" rx="92.8" ry="59.2" fill="#bad6da"/>
<ellipse cx="1059.2" cy="665.2" rx="92.8" ry="59.2" fill="#daedf0" clip-path="url(#cpTop)"/>
<ellipse cx="1059.2" cy="652.4" rx="92.8" ry="59.2" fill="none" stroke="#a9c9cd" stroke-width="1"/>
<rect x="966.4" y="650.6" width="93.6" height="1.6" fill="#f4fafa"/>
<rect x="966.4" y="652" width="93.6" height="13.6" fill="#07851a"/>
</svg><div class="tx" style="left:804px;width:510px;text-align:center;top:808px">Used space: 17.9MB (0.2%)</div><div class="tx" style="left:804px;width:510px;text-align:center;top:824px">Free space: 10222.1MB (99.8%)</div>
<div class="panel" style="left:804px;top:854px;width:510px;height:166px"><div class="ph"><div class="t">Total Performance Monitors by Type</div><div class="m">Menu</div></div></div>
<div class="tx " style="left:806.5px;top:900.5px;font-size:11.8px;">Performance Monitor Type</div><div class="tx r" style="right:433px;top:900.5px;font-size:11.8px;">Count</div><div class="tx r" style="right:368px;top:900.5px;font-size:11.8px;">Percent</div><div class="tx r" style="right:290px;top:900.5px;font-size:11.8px;">Polls Per Min</div><div class="hl" style="left:805px;top:914.5px;width:508px;background:#d4d4d4"></div><svg class="abs" style="left:808px;top:917.0px" width="14" height="14" viewBox="0 0 13 13"><circle cx="6.5" cy="6.5" r="5.5" fill="#3f8fe0"/><path d="M2 5 Q5 2 8 4 Q10 6 7 8 Q4 9 3 11 Q1 8 2 5Z" fill="#45b545"/><path d="M9 8 Q11 8 11 10 Q9 12 8 11Z" fill="#45b545"/><path d="M1 3 L5 3 L3 0Z M12 10 L8 10 L10 13Z" fill="#8fd08f"/></svg><div class="tx " style="left:826px;top:917.5px;">Ping Latency and Availability</div><div class="tx r" style="right:433px;top:917.5px;">31</div><div class="tx r" style="right:368px;top:917.5px;">36.5%</div><div class="tx r" style="right:290px;top:917.5px;">3.1</div><div class="hl" style="left:805px;top:933.2px;width:508px;background:#efefef"></div><svg class="abs" style="left:808px;top:935.5px" width="14" height="14" viewBox="0 0 13 13"><path d="M1.5 1 V12.5" stroke="#222" stroke-width="1.6"/><rect x="2.5" y="2.5" width="10" height="7" fill="#1d8a1d"/><rect x="4" y="4" width="4" height="2" fill="#6fd06f"/><rect x="2.5" y="8.5" width="10" height="1.3" fill="#0c4d0c"/></svg><div class="tx " style="left:826px;top:936.0px;">Interface Utilization</div><div class="tx r" style="right:433px;top:936.0px;">21</div><div class="tx r" style="right:368px;top:936.0px;">24.7%</div><div class="tx r" style="right:290px;top:936.0px;">2.1</div><div class="hl" style="left:805px;top:951.7px;width:508px;background:#efefef"></div><svg class="abs" style="left:808px;top:954.0px" width="14" height="14" viewBox="0 0 13 13"><path d="M1 8 L9 1 L12 3 L4 11Z" fill="#6f6f6f"/><path d="M1 8 L4 11 L4 13 L1 10Z" fill="#444"/><path d="M4 11 L12 3 L12 5 L4 13Z" fill="#8a8a8a"/><path d="M3 7 L5 9 M5 5 L7 7 M7 3.5 L9 5.5" stroke="#bbb" stroke-width="1"/></svg><div class="tx " style="left:826px;top:954.5px;">Memory Utilization</div><div class="tx r" style="right:433px;top:954.5px;">17</div><div class="tx r" style="right:368px;top:954.5px;">20.0%</div><div class="tx r" style="right:290px;top:954.5px;">1.7</div><div class="hl" style="left:805px;top:970.2px;width:508px;background:#efefef"></div><svg class="abs" style="left:808px;top:972.5px" width="14" height="14" viewBox="0 0 13 13"><path d="M1 9 L9 3 L12 5 L4 11Z" fill="#777"/><path d="M1 9 L4 11 L4 12.5 L1 10.5Z" fill="#444"/><path d="M4 11 L12 5 L12 6.5 L4 12.5Z" fill="#999"/></svg><div class="tx " style="left:826px;top:973.0px;">CPU Utilization</div><div class="tx r" style="right:433px;top:973.0px;">16</div><div class="tx r" style="right:368px;top:973.0px;">18.8%</div><div class="tx r" style="right:290px;top:973.0px;">1.6</div><div class="hl" style="left:805px;top:991px;width:508px;background:#d4d4d4"></div><div class="tx " style="left:810px;top:995.8px;font-weight:bold">Total:</div><div class="tx r" style="right:433px;top:995.8px;font-weight:bold">85</div><div class="tx r" style="right:290px;top:995.8px;font-weight:bold">8.5</div>
<!--/PANELS-->
</div>
</body>
</html>
